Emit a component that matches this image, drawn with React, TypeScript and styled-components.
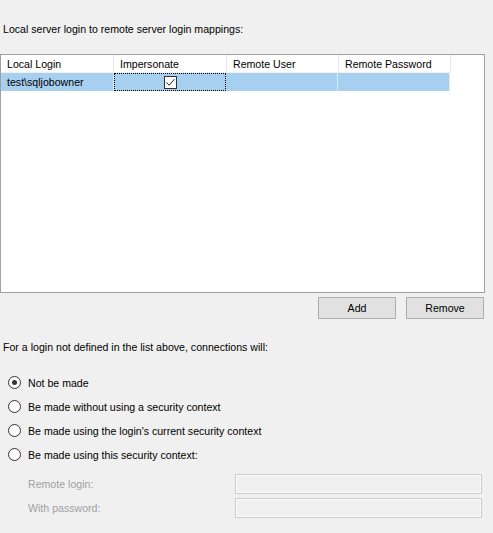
import styled, { createGlobalStyle } from 'styled-components'

const Global = createGlobalStyle`
  html, body {
    margin: 0;
    padding: 0;
    background: #f0f0f0;
  }
  body {
    font-family: "Liberation Sans", Arial, sans-serif;
    font-size: 10.6px;
    color: #000;
  }
`

const columns = ['Local Login', 'Impersonate', 'Remote User', 'Remote Password']
const widths = [113, 113, 112, 112]

const options = [
  'Not be made',
  'Be made without using a security context',
  "Be made using the login's current security context",
  'Be made using this security context:',
]

export default function App() {
  return (
    <Page>
      <Global />
      <Caption>Local server login to remote server login mappings:</Caption>
      <ListBox>
        <HeaderRow>
          {columns.map((c, i) => (
            <HeaderCell key={c} style={{ width: widths[i] }}>{c}</HeaderCell>
          ))}
        </HeaderRow>
        <DataRow>
          <Cell style={{ width: widths[0] }}>test\sqljobowner</Cell>
          <FocusCell style={{ width: widths[1] }}>
            <CheckBox>
              <svg width="11" height="11" viewBox="0 0 11 11">
                <path d="M1.5 5.5 L4.2 8.2 L9.5 2.2" fill="none" stroke="#222" strokeWidth="1" />
              </svg>
            </CheckBox>
          </FocusCell>
          <Cell style={{ width: widths[2] }} />
          <Cell style={{ width: widths[3] }} />
        </DataRow>
      </ListBox>
      <ButtonRow>
        <Button>Add</Button>
        <Button>Remove</Button>
      </ButtonRow>
      <Caption $top={22}>For a login not defined in the list above, connections will:</Caption>
      <RadioList>
        {options.map((o, i) => (
          <RadioRow key={o}>
            <Radio $checked={i === 0} />
            <span>{o}</span>
          </RadioRow>
        ))}
      </RadioList>
      <Fields>
        <FieldRow>
          <FieldLabel>Remote login:</FieldLabel>
          <Input />
        </FieldRow>
        <FieldRow>
          <FieldLabel>With password:</FieldLabel>
          <Input />
        </FieldRow>
      </Fields>
    </Page>
  )
}

const Page = styled.div`
  width: 493px;
  height: 533px;
  display: flex;
  flex-direction: column;
  overflow: hidden;
`
const Caption = styled.div<{ $top?: number }>`
  margin-top: ${p => p.$top ?? 23}px;
  padding-left: 3px;
  height: 13px;
  line-height: 13px;
`
const ListBox = styled.div`
  margin-top: 18px;
  width: 483px;
  height: 237px;
  border: 1px solid #a0a0a0;
  background: #fff;
`
const HeaderRow = styled.div`
  display: flex;
  height: 18px;
`
const HeaderCell = styled.div`
  box-sizing: border-box;
  padding-left: 6px;
  line-height: 18px;
  border-right: 1px solid #e5e5e5;
  border-bottom: 1px solid #f0f0f0;
  white-space: nowrap;
`
const DataRow = styled.div`
  display: flex;
  height: 18px;
  background: #a6cff0;
  width: 449px;
`
const Cell = styled.div`
  box-sizing: border-box;
  padding-left: 6px;
  line-height: 19px;
  border-right: 1px solid #d8e9f8;
  white-space: nowrap;
`
const FocusCell = styled.div`
  box-sizing: border-box;
  border: 1px dotted #000;
  display: flex;
  justify-content: center;
  align-items: center;
`
const CheckBox = styled.div`
  width: 11px;
  height: 11px;
  border: 1px solid #333;
  background: #fff;
  display: flex;
  align-items: center;
  justify-content: center;
`
const ButtonRow = styled.div`
  display: flex;
  justify-content: flex-end;
  gap: 10px;
  padding-right: 9px;
  margin-top: 4px;
`
const Button = styled.div`
  box-sizing: border-box;
  width: 78px;
  height: 22px;
  background: #e1e1e1;
  border: 1px solid #adadad;
  display: flex;
  align-items: center;
  justify-content: center;
`
const RadioList = styled.div`
  margin-top: 22px;
  padding-left: 8px;
  display: flex;
  flex-direction: column;
  gap: 11px;
`
const RadioRow = styled.div`
  display: flex;
  align-items: center;
  gap: 7px;
  height: 13px;
`
const Radio = styled.div<{ $checked: boolean }>`
  box-sizing: border-box;
  width: 13px;
  height: 13px;
  border-radius: 50%;
  border: 1px solid #333;
  background: #fff;
  display: flex;
  align-items: center;
  justify-content: center;
  &::after {
    content: '';
    width: 5px;
    height: 5px;
    border-radius: 50%;
    background: ${p => (p.$checked ? '#333' : 'transparent')};
  }
`
const Fields = styled.div`
  margin-top: 13px;
  display: flex;
  flex-direction: column;
  gap: 4px;
`
const FieldRow = styled.div`
  display: flex;
  align-items: center;
  justify-content: space-between;
  padding-left: 28px;
  padding-right: 11px;
`
const FieldLabel = styled.span`
  color: #a0a0a0;
`
const Input = styled.div`
  box-sizing: border-box;
  width: 247px;
  height: 20px;
  border: 1px solid #cccccc;
  box-shadow: inset 0 0 0 1px #fbfbfb;
  background: #f0f0f0;
`
